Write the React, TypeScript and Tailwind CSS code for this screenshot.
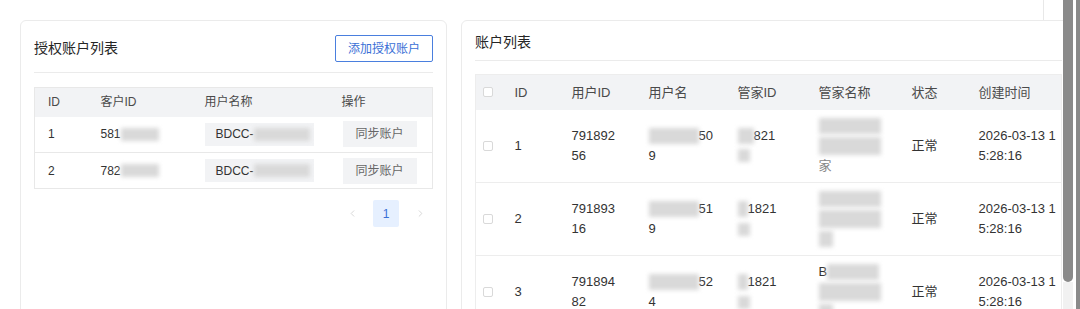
import { ChevronLeft, ChevronRight } from "lucide-react";

const leftRows = [
  { id: 1, customer: "581", user: "BDCC-" },
  { id: 2, customer: "782", user: "BDCC-" },
];

const rightRows = [
  { id: 1, uid: ["791892", "56"], uname: ["50", "9"], mgr: "821" },
  { id: 2, uid: ["791893", "16"], uname: ["51", "9"], mgr: "1821" },
  { id: 3, uid: ["791894", "82"], uname: ["52", "4"], mgr: "1821" },
];

function Blur({ className }: { className: string }) {
  return <span className={`inline-block h-[13px] align-middle bg-[#d9d9d9] blur-[2px] ${className}`} />;
}

function Checkbox() {
  return <span className="block h-[10px] w-[10px] rounded-[2px] border border-[#d9d9d9] bg-white" />;
}

function AuthCard() {
  return (
    <div className="h-[320px] w-[427px] shrink-0 rounded-md border border-[#ebebeb] bg-white px-[13px]">
      <div className="flex items-center justify-between border-b border-[#ebebeb] pb-[10px] pt-[14px]">
        <h2 className="text-[14px] text-[#262626]">授权账户列表</h2>
        <button className="h-[27px] w-[98px] rounded-[2px] border border-[#4a7fde] text-[12px] text-[#3a6fd6]">
          添加授权账户
        </button>
      </div>

      <table className="mt-[14px] w-full table-fixed border-collapse border border-[#e8e8e8] text-[12px]">
        <colgroup>
          <col className="w-[52px]" />
          <col className="w-[104px]" />
          <col className="w-[137px]" />
          <col />
        </colgroup>
        <thead>
          <tr className="h-[29px] bg-[#f2f3f5] text-left text-[#4a4a4a]">
            <th className="pl-[13px] font-normal">ID</th>
            <th className="pl-[14px] font-normal">客户ID</th>
            <th className="pl-[14px] font-normal">用户名称</th>
            <th className="pl-[14px] font-normal">操作</th>
          </tr>
        </thead>
        <tbody className="text-[#333]">
          {leftRows.map((row) => (
            <tr key={row.id} className="h-[36px] border-b border-[#e8e8e8]">
              <td className="pl-[13px]">{row.id}</td>
              <td className="pl-[14px]">
                <span className="flex items-center">
                  {row.customer}
                  <Blur className="w-[38px]" />
                </span>
              </td>
              <td className="pl-[14px]">
                <span className="flex h-[23px] w-[109px] items-center bg-[#f2f3f5] pl-[11px]">
                  {row.user}
                  <Blur className="w-[56px]" />
                </span>
              </td>
              <td className="pl-[15px]">
                <button className="h-[26px] w-[74px] bg-[#f2f3f5] text-[12px] text-[#666]">同步账户</button>
              </td>
            </tr>
          ))}
        </tbody>
      </table>

      <div className="mt-[11px] flex justify-end gap-2">
        <span className="flex h-[27px] w-[26px] items-center justify-center text-[#c6c6c6]">
          <ChevronLeft size={11} strokeWidth={1.5} />
        </span>
        <span className="flex h-[27px] w-[26px] items-center justify-center rounded-[2px] bg-[#e6f0ff] text-[12px] text-[#3a6fd6]">
          1
        </span>
        <span className="flex h-[27px] w-[26px] items-center justify-center text-[#c6c6c6]">
          <ChevronRight size={11} strokeWidth={1.5} />
        </span>
      </div>
    </div>
  );
}

function Lines({ children }: { children: React.ReactNode }) {
  return <div className="flex flex-col leading-5">{children}</div>;
}

function AccountCard() {
  return (
    <div className="h-[320px] w-[615px] shrink-0 rounded-md border border-[#ebebeb] bg-white px-[13px]">
      <div className="flex h-[40px] items-center border-b border-[#ebebeb] pt-1">
        <h2 className="text-[14px] text-[#262626]">账户列表</h2>
      </div>

      <table className="mt-[13px] w-[587px] table-fixed border-collapse border border-[#ededed] text-[13px]">
        <colgroup>
          <col className="w-[31px]" />
          <col className="w-[57px]" />
          <col className="w-[77px]" />
          <col className="w-[89px]" />
          <col className="w-[81px]" />
          <col className="w-[93px]" />
          <col className="w-[67px]" />
          <col />
        </colgroup>
        <thead>
          <tr className="h-[35px] bg-[#f2f3f5] text-left text-[#4a4a4a]">
            <th className="pl-[7px] font-normal">
              <Checkbox />
            </th>
            <th className="pl-2 font-normal">ID</th>
            <th className="pl-2 font-normal">用户ID</th>
            <th className="pl-2 font-normal">用户名</th>
            <th className="pl-2 font-normal">管家ID</th>
            <th className="pl-2 font-normal">管家名称</th>
            <th className="pl-2 font-normal">状态</th>
            <th className="pl-2 font-normal">创建时间</th>
          </tr>
        </thead>
        <tbody className="text-[#333]">
          {rightRows.map((row) => (
            <tr key={row.id} className="h-[73px] border-b border-[#ededed] align-middle">
              <td className="pl-[7px]">
                <Checkbox />
              </td>
              <td className="pl-2">{row.id}</td>
              <td className="pl-2">
                <Lines>
                  <span>{row.uid[0]}</span>
                  <span>{row.uid[1]}</span>
                </Lines>
              </td>
              <td className="pl-2">
                <Lines>
                  <span className="flex items-center">
                    <Blur className="w-[50px] h-[16px]" />
                    {row.uname[0]}
                  </span>
                  <span>{row.uname[1]}</span>
                </Lines>
              </td>
              <td className="pl-2">
                <Lines>
                  <span className="flex items-center">
                    <Blur className={row.mgr.length > 3 ? "w-[10px] h-[16px]" : "w-[16px] h-[16px]"} />
                    {row.mgr}
                  </span>
                  <span className="flex h-5 items-center">
                    <Blur className="w-[12px]" />
                  </span>
                </Lines>
              </td>
              <td className="pl-2">
                <Lines>
                  <span className="flex h-5 items-center">
                    {row.id === 3 && <span>B</span>}
                    <Blur className={row.id === 3 ? "w-[52px] h-[16px]" : "w-[62px] h-[16px]"} />
                  </span>
                  <span className="flex h-5 items-center">
                    <Blur className="w-[62px] h-[18px]" />
                  </span>
                  <span className="flex h-5 items-center">
                    {row.id === 1 ? <span className="text-[#888]">家</span> : <Blur className="w-[14px] h-[16px]" />}
                  </span>
                </Lines>
              </td>
              <td className="pl-2">正常</td>
              <td className="pl-2">
                <Lines>
                  <span>2026-03-13 1</span>
                  <span>5:28:16</span>
                </Lines>
              </td>
            </tr>
          ))}
        </tbody>
      </table>
    </div>
  );
}

export default function App() {
  return (
    <div className="flex h-[309px] w-[1080px] overflow-hidden bg-white font-['Liberation_Sans','Noto_Sans_CJK_SC',sans-serif]">
      <div className="flex w-[1063px] shrink-0 flex-col overflow-hidden">
        <div className="h-5 w-[1044px] shrink-0 border-r border-[#e8e8e8]" />
        <div className="flex gap-[14px] pl-5">
          <AuthCard />
          <AccountCard />
        </div>
      </div>
      <div className="flex w-[10px] shrink-0 flex-col">
        <div className="h-[282px] rounded-b-full bg-[#8a8a8a]" />
        <div className="flex-1 bg-[#f1f1f1]" />
      </div>
      <div className="w-[3px] shrink-0 bg-white" />
      <div className="w-[4px] shrink-0 bg-[#8a8a8a]" />
    </div>
  );
}
